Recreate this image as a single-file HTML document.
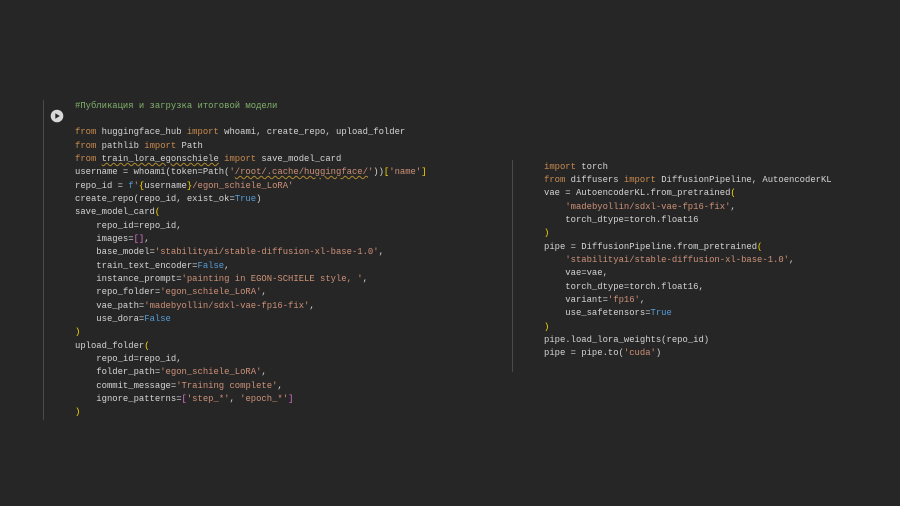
<!DOCTYPE html>
<html><head><meta charset="utf-8"><style>
html,body{margin:0;padding:0;background:#262626;width:900px;height:506px;overflow:hidden}
pre{position:absolute;margin:0;font-family:"Liberation Mono","DejaVu Sans Mono",monospace;font-size:8.9px;line-height:13.35px;color:#d4d4d4;white-space:pre}
.k{color:#c98b4f}.s{color:#ce9178}.b{color:#569cd6}.c{color:#7fb069}.y{color:#ffd700}.p{color:#da70d6}
.u{text-decoration:underline wavy #b08a30;text-decoration-thickness:1px}
.vl{position:absolute;width:1px;background:#4a4a4a}
</style></head><body>
<div class="vl" style="left:43px;top:100px;height:320px"></div>
<div class="vl" style="left:512px;top:160px;height:212px"></div>
<svg style="position:absolute;left:50px;top:109px" width="14" height="14"><circle cx="7" cy="7" r="6.3" fill="#d8d8d8"/><path d="M5.3 4.2 L9.8 7 L5.3 9.8Z" fill="#262626"/></svg>
<pre style="left:75px;top:99.5px"><span class="c">#Публикация и загрузка итоговой модели</span>

<span class="k">from</span> huggingface_hub <span class="k">import</span> whoami, create_repo, upload_folder
<span class="k">from</span> pathlib <span class="k">import</span> Path
<span class="k">from</span> <span class="u">train_lora_egonschiele</span> <span class="k">import</span> save_model_card
username = whoami(token=Path(<span class="s">'<span class="u">/root/.cache/huggingface/</span>'</span>))<span class="y">[</span><span class="s">'name'</span><span class="y">]</span>
repo_id = <span class="b">f</span><span class="s">'</span><span class="y">{</span>username<span class="y">}</span><span class="s">/egon_schiele_LoRA'</span>
create_repo(repo_id, exist_ok=<span class="b">True</span>)
save_model_card<span class="y">(</span>
    repo_id=repo_id,
    images=<span class="p">[]</span>,
    base_model=<span class="s">'stabilityai/stable-diffusion-xl-base-1.0'</span>,
    train_text_encoder=<span class="b">False</span>,
    instance_prompt=<span class="s">'painting in EGON-SCHIELE style, '</span>,
    repo_folder=<span class="s">'egon_schiele_LoRA'</span>,
    vae_path=<span class="s">'madebyollin/sdxl-vae-fp16-fix'</span>,
    use_dora=<span class="b">False</span>
<span class="y">)</span>
upload_folder<span class="y">(</span>
    repo_id=repo_id,
    folder_path=<span class="s">'egon_schiele_LoRA'</span>,
    commit_message=<span class="s">'Training complete'</span>,
    ignore_patterns=<span class="p">[</span><span class="s">'step_*'</span>, <span class="s">'epoch_*'</span><span class="p">]</span>
<span class="y">)</span></pre>
<pre style="left:544px;top:160.5px"><span class="k">import</span> torch
<span class="k">from</span> diffusers <span class="k">import</span> DiffusionPipeline, AutoencoderKL
vae = AutoencoderKL.from_pretrained<span class="y">(</span>
    <span class="s">'madebyollin/sdxl-vae-fp16-fix'</span>,
    torch_dtype=torch.float16
<span class="y">)</span>
pipe = DiffusionPipeline.from_pretrained<span class="y">(</span>
    <span class="s">'stabilityai/stable-diffusion-xl-base-1.0'</span>,
    vae=vae,
    torch_dtype=torch.float16,
    variant=<span class="s">'fp16'</span>,
    use_safetensors=<span class="b">True</span>
<span class="y">)</span>
pipe.load_lora_weights(repo_id)
pipe = pipe.to(<span class="s">'cuda'</span>)</pre>
</body></html>
